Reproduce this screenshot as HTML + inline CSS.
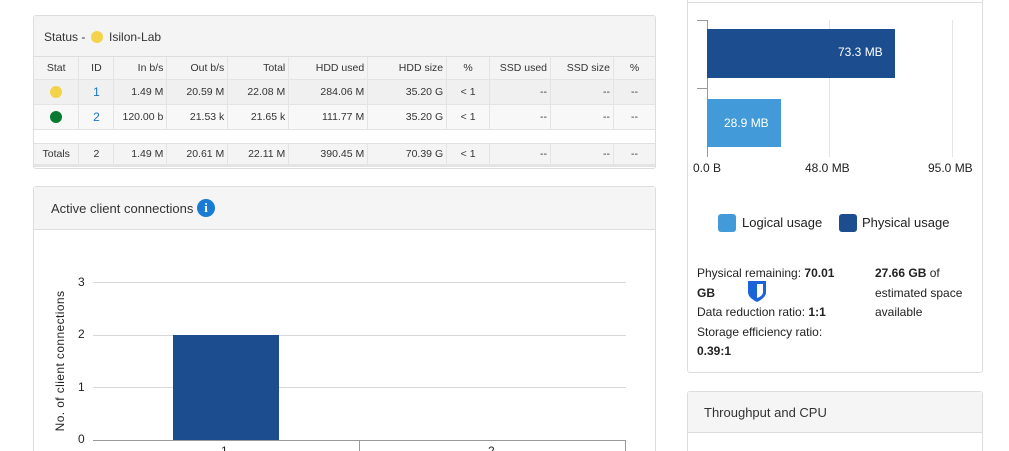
<!DOCTYPE html>
<html><head><style>
*{margin:0;padding:0;box-sizing:border-box}
html,body{width:1009px;height:451px;overflow:hidden}
body{background:#fff;font-family:"Liberation Sans",sans-serif;color:#222;position:relative}
.a{position:absolute}
.panel{position:absolute;border:1px solid #ddd;border-radius:3px;background:#fff}
.hd{position:absolute;left:0;right:0;top:0;background:#f5f5f5;border-bottom:1px solid #ddd}
table{position:absolute;border-collapse:collapse;font-size:10.5px;color:#333}
td{border-right:1px solid #e4e4e4;text-align:right;padding-right:3px;white-space:nowrap}
td.c{text-align:center;padding:0}
.dot{display:inline-block;width:12px;height:12px;border-radius:50%;vertical-align:middle}
.t{position:absolute;white-space:nowrap}
</style></head><body>

<div class="panel" style="left:33px;top:15px;width:623px;height:154px;overflow:hidden">
 <div class="hd" style="height:41px;background:#f4f4f4"></div>
 <div class="t" style="left:10px;top:14px;font-size:12px;color:#333">Status - <span class="dot" style="background:#f3d34a;margin:-2px 3px 0 2px"></span> Isilon-Lab</div>
 <table style="left:0;top:41px;width:622px">
  <colgroup><col style="width:45px"><col style="width:35px"><col style="width:53px"><col style="width:61px"><col style="width:61px"><col style="width:79px"><col style="width:79px"><col style="width:43px"><col style="width:61px"><col style="width:63px"><col style="width:42px"></colgroup>
  <tr style="height:22px;background:#f4f4f4"><td class="c">Stat</td><td class="c">ID</td><td>In b/s</td><td>Out b/s</td><td>Total</td><td>HDD used</td><td>HDD size</td><td class="c">%</td><td>SSD used</td><td>SSD size</td><td class="c">%</td></tr>
  <tr style="height:25px;background:#f0f0f0;border-top:1px solid #e4e4e4"><td class="c"><span class="dot" style="background:#f3d34a"></span></td><td class="c" style="color:#1a73c8;font-size:12px">1</td><td>1.49 M</td><td>20.59 M</td><td>22.08 M</td><td>284.06 M</td><td>35.20 G</td><td class="c">&lt; 1</td><td>--</td><td>--</td><td class="c">--</td></tr>
  <tr style="height:25px;background:#f8f8f8;border-top:1px solid #e4e4e4;border-bottom:1px solid #e4e4e4"><td class="c"><span class="dot" style="background:#0a7a32"></span></td><td class="c" style="color:#1a73c8;font-size:12px">2</td><td>120.00 b</td><td>21.53 k</td><td>21.65 k</td><td>111.77 M</td><td>35.20 G</td><td class="c">&lt; 1</td><td>--</td><td>--</td><td class="c">--</td></tr>
  <tr style="height:14px;background:#fff"><td colspan="11" style="border:none"></td></tr>
  <tr style="height:22px;background:#f4f4f4;border-top:1px solid #e0e0e0;border-bottom:3px solid #e4e4e4"><td class="c">Totals</td><td class="c">2</td><td>1.49 M</td><td>20.61 M</td><td>22.11 M</td><td>390.45 M</td><td>70.39 G</td><td class="c">&lt; 1</td><td>--</td><td>--</td><td class="c">--</td></tr>
 </table>
</div>

<div class="panel" style="left:33px;top:186px;width:623px;height:320px">
 <div class="hd" style="height:43px"></div>
 <div class="t" style="left:17px;top:14px;font-size:13px;color:#333">Active client connections</div>
 <div class="a" style="left:163px;top:12px;width:18px;height:18px;border-radius:50%;background:#1a7bd4;color:#fff;font-weight:bold;font-size:13px;text-align:center;line-height:18px;font-family:'Liberation Serif',serif">i</div>
</div>
<div class="a" style="left:93px;top:282px;width:533px;height:1px;background:#d8d8d8"></div>
<div class="a" style="left:93px;top:335px;width:533px;height:1px;background:#d8d8d8"></div>
<div class="a" style="left:93px;top:387px;width:533px;height:1px;background:#d8d8d8"></div>
<div class="a" style="left:93px;top:440px;width:533px;height:1px;background:#999"></div>
<div class="a" style="left:359px;top:440px;width:1px;height:11px;background:#999"></div>
<div class="a" style="left:625px;top:440px;width:1px;height:11px;background:#999"></div>
<div class="a" style="left:173px;top:335px;width:106px;height:105px;background:#1c4e8f"></div>
<div class="t" style="left:78px;top:275px;font-size:12px">3</div>
<div class="t" style="left:78px;top:327px;font-size:12px">2</div>
<div class="t" style="left:78px;top:380px;font-size:12px">1</div>
<div class="t" style="left:78px;top:432px;font-size:12px">0</div>
<div class="t" style="left:221px;top:444px;font-size:12px">1</div>
<div class="t" style="left:488px;top:444px;font-size:12px">2</div>
<div class="t" style="left:60px;top:361px;font-size:12px;transform:translate(-50%,-50%) rotate(-90deg);letter-spacing:0.4px">No. of client connections</div>

<div class="panel" style="left:687px;top:-10px;width:296px;height:383px">
 <div class="a" style="left:0;right:0;top:11px;height:1px;background:#ddd"></div>
</div>
<div class="a" style="left:829px;top:20px;width:1px;height:137px;background:#e4e4e4"></div>
<div class="a" style="left:952px;top:20px;width:1px;height:137px;background:#e4e4e4"></div>
<div class="a" style="left:707px;top:20px;width:1px;height:137px;background:#999"></div>
<div class="a" style="left:697px;top:20px;width:10px;height:1px;background:#999"></div>
<div class="a" style="left:697px;top:88px;width:10px;height:1px;background:#999"></div>
<div class="a" style="left:707px;top:29px;width:188px;height:49px;background:#1c4e8f"></div>
<div class="t" style="left:838px;top:45px;font-size:12px;color:#fff">73.3 MB</div>
<div class="a" style="left:707px;top:99px;width:74px;height:48px;background:#429bd8"></div>
<div class="t" style="left:724px;top:116px;font-size:12px;color:#fff">28.9 MB</div>
<div class="t" style="left:693px;top:161px;font-size:12px">0.0 B</div>
<div class="t" style="left:805px;top:161px;font-size:12px">48.0 MB</div>
<div class="t" style="left:928px;top:161px;font-size:12px">95.0 MB</div>
<div class="a" style="left:718px;top:214px;width:18px;height:18px;border-radius:3px;background:#429bd8"></div>
<div class="t" style="left:742px;top:215px;font-size:13px">Logical usage</div>
<div class="a" style="left:839px;top:214px;width:18px;height:18px;border-radius:3px;background:#1c4e8f"></div>
<div class="t" style="left:862px;top:215px;font-size:13px">Physical usage</div>
<div class="t" style="left:697px;top:264px;font-size:12px;line-height:19.5px">Physical remaining: <b>70.01</b><br><b>GB</b><br>Data reduction ratio: <b>1:1</b><br>Storage efficiency ratio:<br><b>0.39:1</b></div>
<svg class="a" style="left:747px;top:280px" width="20" height="23" viewBox="0 0 20 23"><path d="M1 1H19V12C19 17 14 20 10 22C6 20 1 17 1 12Z" fill="#1a63d8"/><path d="M10 4H16V12C16 15 13 17 10 18Z" fill="#fff"/></svg>
<div class="t" style="left:875px;top:264px;font-size:12px;line-height:19.5px"><b>27.66 GB</b> of<br>estimated space<br>available</div>

<div class="panel" style="left:687px;top:391px;width:296px;height:120px">
 <div class="hd" style="height:41px"></div>
 <div class="t" style="left:16px;top:13px;font-size:13px;color:#333">Throughput and CPU</div>
</div>
</body></html>
